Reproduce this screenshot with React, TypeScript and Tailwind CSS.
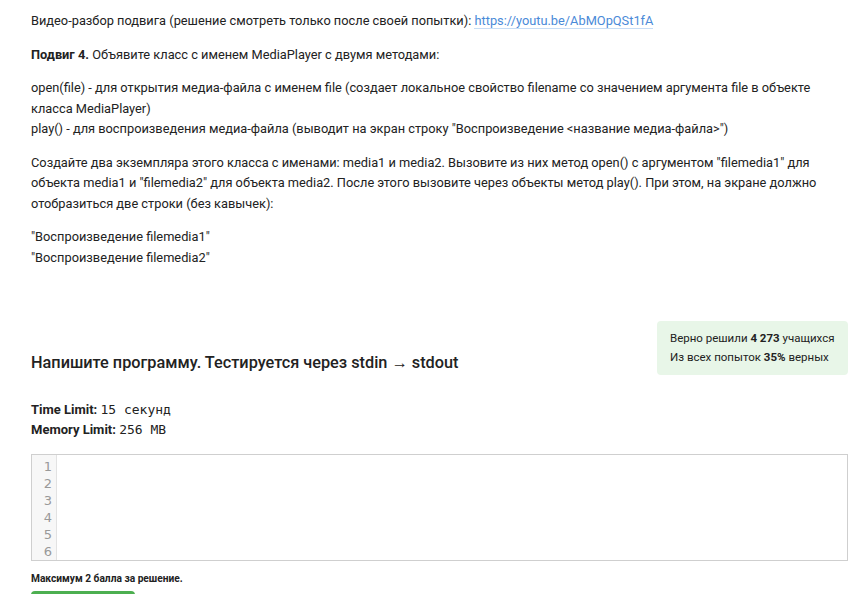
import React from 'react';

const lines = [1, 2, 3, 4, 5, 6];

export default function App() {
  return (
    <div className="min-h-[594px] bg-white font-['Roboto',sans-serif] text-[#222]">
      <div className="w-[848px] pl-[31px] pt-[11px]">
        {/* Task text */}
        <div className="text-[12.8px] leading-[20.5px]">
          <p className="mb-[13px]">
            Видео-разбор подвига (решение смотреть только после своей попытки):{' '}
            <a href="#" className="text-[#4a8ad8] border-b border-[#c7ddf6]">
              https://youtu.be/AbMOpQSt1fA
            </a>
          </p>
          <p className="mb-[13px]">
            <b className="font-bold">Подвиг 4.</b> Объявите класс с именем MediaPlayer с двумя методами:
          </p>
          <p className="mb-[13px]">
            open(file) - для открытия медиа-файла с именем file (создает локальное свойство filename со значением аргумента file в объекте класса MediaPlayer)
            <br />
            play() - для воспроизведения медиа-файла (выводит на экран строку "Воспроизведение &lt;название медиа-файла&gt;")
          </p>
          <p className="mb-[13px]">
            Создайте два экземпляра этого класса с именами: media1 и media2. Вызовите из них метод open() с аргументом "filemedia1" для объекта media1 и "filemedia2" для объекта media2. После этого вызовите через объекты метод play(). При этом, на экране должно отобразиться две строки (без кавычек):
          </p>
          <p>
            "Воспроизведение filemedia1"
            <br />
            "Воспроизведение filemedia2"
          </p>
        </div>

        {/* Heading + stats */}
        <div className="mt-[53px] flex items-end justify-between">
          <h2 className="text-[16.3px] font-medium leading-[24px]">
            Напишите программу. Тестируется через stdin → stdout
          </h2>
          <div className="w-[191px] rounded-[4px] bg-[#e8f6e8] px-[13px] py-[8px] text-[11.5px] leading-[19px] text-[#222]">
            <div>
              Верно решили <b className="font-bold">4 273</b> учащихся
            </div>
            <div>
              Из всех попыток <b className="font-bold">35%</b> верных
            </div>
          </div>
        </div>

        {/* Limits */}
        <div className="mt-[25px] text-[13px] leading-[20px]">
          <div className="h-[20px]">
            <b className="font-bold">Time Limit:</b>{' '}
            <span className="font-['DejaVu_Sans_Mono',monospace] text-[13px] leading-[20px]">15 секунд</span>
          </div>
          <div className="h-[20px]">
            <b className="font-bold">Memory Limit:</b>{' '}
            <span className="font-['DejaVu_Sans_Mono',monospace] text-[13px] leading-[20px]">256 MB</span>
          </div>
        </div>

        {/* Editor */}
        <div className="mt-[14px] flex h-[107px] w-[817px] border border-[#cfcfcf] bg-white">
          <div className="w-[25px] border-r border-[#e2e2e2] bg-[#f7f7f7] pt-[3px] pr-[4px] text-right font-['DejaVu_Sans',sans-serif] text-[13px] leading-[17px] text-[#999]">
            {lines.map((n) => (
              <div key={n}>{n}</div>
            ))}
          </div>
          <div className="flex-1" />
        </div>

        <div className="mt-[11px] text-[10.2px] font-bold leading-[14px]">Максимум 2 балла за решение.</div>

        <div className="mt-[5px] h-[30px] w-[104px] rounded-[4px] bg-[#4caf50]" />
      </div>
    </div>
  );
}
